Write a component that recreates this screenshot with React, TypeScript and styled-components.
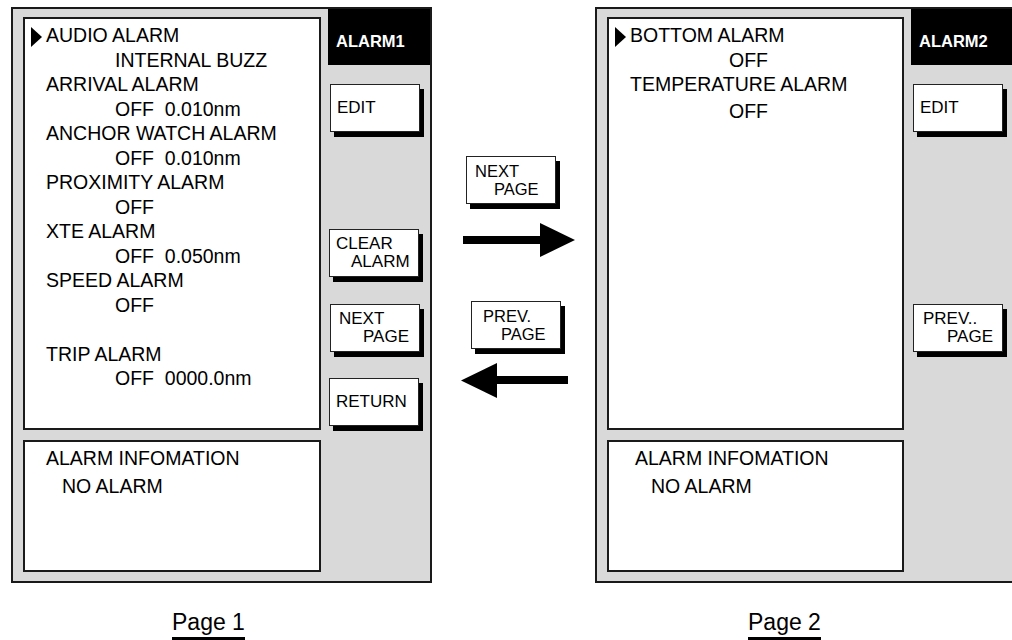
import React from 'react';
import styled, { createGlobalStyle } from 'styled-components';

const GlobalStyle = createGlobalStyle`
  html, body {
    margin: 0;
    padding: 0;
    background: #ffffff;
  }
  body {
    font-family: 'Liberation Sans', Arial, sans-serif;
    color: #000000;
  }
`;

const Sheet = styled.div`
  display: flex;
  align-items: flex-start;
  width: 1012px;
  height: 640px;
  box-sizing: border-box;
  padding: 7px 0 0 11px;
  overflow: hidden;
`;

const PageColumn = styled.div`
  display: flex;
  flex-direction: column;
  width: 421px;
  flex-shrink: 0;
`;

const Frame = styled.div`
  display: flex;
  height: 576px;
  box-sizing: border-box;
  border: 2px solid #1a1a1a;
  background: #d9d9d9;
`;

const MainArea = styled.div`
  display: flex;
  flex-direction: column;
  gap: 10px;
  padding: 8px 0 0 10px;
`;

const ListBox = styled.div<{ $w: number }>`
  width: ${p => p.$w}px;
  height: 413px;
  box-sizing: border-box;
  border: 2px solid #1a1a1a;
  background: #ffffff;
  padding: 4px 0 0 6px;
  font-size: 19.5px;
`;

const Line = styled.div<{ $indent?: number; $gap?: number }>`
  display: flex;
  align-items: center;
  height: 24.5px;
  line-height: 24.5px;
  white-space: pre;
  padding-left: ${p => 15 + (p.$indent ?? 0)}px;
  margin-top: ${p => p.$gap ?? 0}px;
`;

const Marker = styled.span`
  width: 0;
  height: 0;
  margin-left: -15px;
  margin-right: 4px;
  margin-top: 3px;
  border-top: 10px solid transparent;
  border-bottom: 10px solid transparent;
  border-left: 11px solid #000000;
`;

const InfoBox = styled.div<{ $w: number; $indent: number }>`
  width: ${p => p.$w}px;
  height: 132px;
  box-sizing: border-box;
  border: 2px solid #1a1a1a;
  background: #ffffff;
  padding: 2px 0 0 ${p => p.$indent}px;
  font-size: 19.5px;
  line-height: 28px;
`;

const InfoSub = styled.div`
  padding-left: 16px;
`;

const SideArea = styled.div`
  display: flex;
  flex-direction: column;
  margin-left: 7px;
  width: 102px;
  flex-shrink: 0;
`;

const Title = styled.div`
  height: 56px;
  box-sizing: border-box;
  background: #000000;
  color: #ffffff;
  font-weight: bold;
  font-size: 16.5px;
  padding: 24px 0 0 8px;
  line-height: 16px;
`;

const SoftKey = styled.div<{ $top: number; $left: number; $size?: number }>`
  display: flex;
  flex-direction: column;
  justify-content: center;
  margin-top: ${p => p.$top}px;
  margin-left: ${p => p.$left}px;
  width: 90px;
  height: 48px;
  box-sizing: border-box;
  border: 1px solid #222222;
  background: #ffffff;
  box-shadow: 4px 5px 0 #000000;
  padding-left: 6px;
  font-size: ${p => p.$size ?? 17}px;
  line-height: 18.5px;
  white-space: nowrap;
`;

const KeyLine = styled.span<{ $indent?: number }>`
  padding-left: ${p => p.$indent ?? 0}px;
`;

const Caption = styled.div<{ $left: number }>`
  align-self: flex-start;
  margin: 28px 0 0 ${p => p.$left}px;
  font-size: 23px;
  line-height: 23px;
  padding-bottom: 3px;
  border-bottom: 3px solid #000000;
`;

const Middle = styled.div`
  display: flex;
  flex-direction: column;
  align-items: flex-start;
  width: 163px;
  flex-shrink: 0;
  padding-top: 149px;
`;

const ArrowBox = styled.svg<{ $top: number; $left: number }>`
  display: block;
  margin-top: ${p => p.$top}px;
  margin-left: ${p => p.$left}px;
`;

type Row = { text: string; indent?: number; marker?: boolean; gap?: number };

const PAGE1: Row[] = [
  { text: 'AUDIO ALARM', marker: true },
  { text: 'INTERNAL BUZZ', indent: 69 },
  { text: 'ARRIVAL ALARM' },
  { text: 'OFF  0.010nm', indent: 69 },
  { text: 'ANCHOR WATCH ALARM' },
  { text: 'OFF  0.010nm', indent: 69 },
  { text: 'PROXIMITY ALARM' },
  { text: 'OFF', indent: 69 },
  { text: 'XTE ALARM' },
  { text: 'OFF  0.050nm', indent: 69 },
  { text: 'SPEED ALARM' },
  { text: 'OFF', indent: 69 },
  { text: 'TRIP ALARM', gap: 24.5 },
  { text: 'OFF  0000.0nm', indent: 69 },
];

const PAGE2: Row[] = [
  { text: 'BOTTOM ALARM', marker: true },
  { text: 'OFF', indent: 99 },
  { text: 'TEMPERATURE ALARM' },
  { text: 'OFF', indent: 99, gap: 2 },
];

function AlarmList({ rows, width }: { rows: Row[]; width: number }) {
  return (
    <ListBox $w={width}>
      {rows.map((row, i) => (
        <Line key={i} $indent={row.indent} $gap={row.gap}>
          {row.marker && <Marker />}
          {row.text}
        </Line>
      ))}
    </ListBox>
  );
}

function ArrowRight() {
  return (
    <ArrowBox $top={19} $left={31} width="112" height="34" viewBox="0 0 112 34">
      <rect x="0" y="13" width="79" height="8" fill="#000" />
      <polygon points="77,0 112,17 77,34" fill="#000" />
    </ArrowBox>
  );
}

function ArrowLeft() {
  return (
    <ArrowBox $top={14} $left={29} width="107" height="35" viewBox="0 0 107 35">
      <polygon points="0,17.5 36,0 36,35" fill="#000" />
      <rect x="34" y="13" width="73" height="8" fill="#000" />
    </ArrowBox>
  );
}

export default function App() {
  return (
    <>
      <GlobalStyle />
      <Sheet>
        {/* Page 1 */}
        <PageColumn>
          <Frame>
            <MainArea>
              <AlarmList rows={PAGE1} width={298} />
              <InfoBox $w={298} $indent={21}>
                ALARM INFOMATION
                <InfoSub>NO ALARM</InfoSub>
              </InfoBox>
            </MainArea>
            <SideArea>
              <Title>ALARM1</Title>
              <SoftKey $top={19} $left={2}>
                <KeyLine>EDIT</KeyLine>
              </SoftKey>
              <SoftKey $top={97} $left={1}>
                <KeyLine>CLEAR</KeyLine>
                <KeyLine $indent={15}>ALARM</KeyLine>
              </SoftKey>
              <SoftKey $top={27} $left={2}>
                <KeyLine $indent={2}>NEXT</KeyLine>
                <KeyLine $indent={26}>PAGE</KeyLine>
              </SoftKey>
              <SoftKey $top={26} $left={1}>
                <KeyLine>RETURN</KeyLine>
              </SoftKey>
            </SideArea>
          </Frame>
          <Caption $left={161}>Page 1</Caption>
        </PageColumn>

        {/* Navigation between pages */}
        <Middle>
          <SoftKey $top={0} $left={34} $size={16.5}>
            <KeyLine $indent={2}>NEXT</KeyLine>
            <KeyLine $indent={21}>PAGE</KeyLine>
          </SoftKey>
          <ArrowRight />
          <SoftKey $top={44} $left={39} $size={16.5}>
            <KeyLine $indent={5}>PREV.</KeyLine>
            <KeyLine $indent={23}>PAGE</KeyLine>
          </SoftKey>
          <ArrowLeft />
        </Middle>

        {/* Page 2 */}
        <PageColumn>
          <Frame>
            <MainArea>
              <AlarmList rows={PAGE2} width={297} />
              <InfoBox $w={297} $indent={26}>
                ALARM INFOMATION
                <InfoSub>NO ALARM</InfoSub>
              </InfoBox>
            </MainArea>
            <SideArea>
              <Title>ALARM2</Title>
              <SoftKey $top={19} $left={2}>
                <KeyLine>EDIT</KeyLine>
              </SoftKey>
              <SoftKey $top={172} $left={2}>
                <KeyLine $indent={3}>PREV..</KeyLine>
                <KeyLine $indent={27}>PAGE</KeyLine>
              </SoftKey>
            </SideArea>
          </Frame>
          <Caption $left={153}>Page 2</Caption>
        </PageColumn>
      </Sheet>
    </>
  );
}
